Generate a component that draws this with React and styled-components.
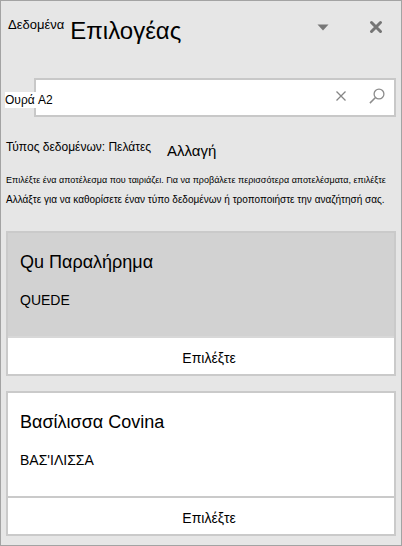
import React, { useState } from "react";
import styled, { createGlobalStyle } from "styled-components";

const results = [
  { id: 1, name: "Qu Παραλήρημα", detail: "QUEDE", selected: true },
  { id: 2, name: "Βασίλισσα Covina", detail: "ΒΑΣ'ΙΛΙΣΣΑ", selected: false },
];

const App = () => {
  const [query, setQuery] = useState("Ουρά A2");

  return (
    <>
      <GlobalStyle />
      <Panel>
        <Header>
          <Prefix>Δεδομένα</Prefix>
          <Title>Επιλογέας</Title>
          <HeaderButton type="button" aria-label="Επιλογές">
            <svg width="12" height="7" viewBox="0 0 12 7">
              <path d="M0.5 0.5h11L6 6.5z" fill="#777" />
            </svg>
          </HeaderButton>
          <HeaderButton type="button" aria-label="Κλείσιμο">
            <svg width="14" height="14" viewBox="0 0 14 14">
              <path
                d="M2.5 2.5l9 9M11.5 2.5l-9 9"
                stroke="#757575"
                strokeWidth="3"
                strokeLinecap="round"
              />
            </svg>
          </HeaderButton>
        </Header>

        <SearchBox onSubmit={(e) => e.preventDefault()}>
          <SearchInput
            type="text"
            aria-label="Αναζήτηση"
            value={query}
            onChange={(e) => setQuery(e.target.value)}
          />
          <SearchButton
            type="button"
            aria-label="Απαλοιφή"
            onClick={() => setQuery("")}
          >
            <svg width="12" height="12" viewBox="0 0 12 12">
              <path
                d="M1.5 1.5l9 9M10.5 1.5l-9 9"
                stroke="#858585"
                strokeWidth="1.3"
              />
            </svg>
          </SearchButton>
          <SearchButton type="submit" aria-label="Αναζήτηση">
            <svg width="16" height="16" viewBox="0 0 16 16" fill="none">
              <circle cx="10" cy="6" r="4.9" stroke="#8c8c8c" strokeWidth="1.3" />
              <path d="M6.5 9.5L0.9 15.1" stroke="#8c8c8c" strokeWidth="1.5" />
            </svg>
          </SearchButton>
        </SearchBox>

        <TypeRow>
          <span>Τύπος δεδομένων: Πελάτες</span>
          <ChangeLink href="#">Αλλαγή</ChangeLink>
        </TypeRow>
        <Hints>
          <Hint $small>
            Επιλέξτε ένα αποτέλεσμα που ταιριάζει. Για να προβάλετε περισσότερα
            αποτελέσματα, επιλέξτε
          </Hint>
          <Hint>
            Αλλάξτε για να καθορίσετε έναν τύπο δεδομένων ή τροποποιήστε την
            αναζήτησή σας.
          </Hint>
        </Hints>

        <CardList>
          {results.map((item) => (
            <Card key={item.id}>
              <CardBody $selected={item.selected}>
                <CardName>{item.name}</CardName>
                <CardDetail>{item.detail}</CardDetail>
              </CardBody>
              <SelectButton type="button">Επιλέξτε</SelectButton>
            </Card>
          ))}
        </CardList>
      </Panel>
    </>
  );
};

const GlobalStyle = createGlobalStyle`
  * {
    box-sizing: border-box;
  }
  body {
    margin: 0;
    background: #e6e6e6;
    color: #000;
    font-family: "Liberation Sans", Arial, sans-serif;
  }
  button, input {
    font-family: inherit;
    color: inherit;
  }
  svg {
    display: block;
  }
`;

const Panel = styled.div`
  min-height: 100vh;
  padding: 0 5px 8px;
  border: 1px solid #a3a3a3;
  background: #e6e6e6;
`;

const Header = styled.header`
  display: flex;
  align-items: flex-start;
  padding: 12px 12px 0 2px;
  height: 77px;
`;

const Prefix = styled.span`
  font-size: 13px;
  line-height: 24px;
`;

const Title = styled.h1`
  flex: 1;
  margin: 0 0 0 6px;
  font-size: 24px;
  font-weight: 400;
  line-height: 36px;
`;

const HeaderButton = styled.button`
  display: flex;
  align-items: center;
  justify-content: center;
  width: 16px;
  height: 28px;
  margin-left: 37px;
  padding: 0;
  border: 0;
  background: none;
`;

const SearchBox = styled.form`
  display: flex;
  align-items: center;
  gap: 20px;
  height: 39px;
  margin-left: 28px;
  padding-right: 9px;
  border: 2px solid #c8c8c8;
  background: #fff;
`;

const SearchInput = styled.input`
  flex: 1;
  min-width: 0;
  height: 16px;
  margin: 4px 0 0 -31px;
  padding: 0;
  border: 0;
  outline: none;
  background: #fff;
  font-size: 12px;
`;

const SearchButton = styled.button`
  display: flex;
  align-items: center;
  justify-content: center;
  width: 16px;
  height: 28px;
  padding: 0 0 4px;
  border: 0;
  background: none;
`;

const TypeRow = styled.div`
  display: flex;
  gap: 16px;
  margin-top: 20px;
  font-size: 12px;
  line-height: 20px;
`;

const ChangeLink = styled.a`
  padding-top: 4px;
  color: inherit;
  font-size: 15px;
  text-decoration: none;
`;

const Hints = styled.div`
  margin-top: 9px;
`;

const Hint = styled.p`
  margin: 0;
  font-size: ${({ $small }) => ($small ? "9px" : "10px")};
  line-height: 20px;
  white-space: nowrap;
`;

const CardList = styled.div`
  display: grid;
  gap: 15px;
  margin-top: 21px;
`;

const Card = styled.section`
  border: 2px solid #cacaca;
  background: #fff;
`;

const CardBody = styled.div`
  height: 105px;
  padding: 17px 12px;
  border-bottom: 2px solid ${({ $selected }) => ($selected ? "#d8d8d8" : "#cacaca")};
  background: ${({ $selected }) => ($selected ? "#d2d2d2" : "#fff")};
`;

const CardName = styled.h2`
  margin: 0;
  font-size: 18px;
  font-weight: 400;
  line-height: 24px;
`;

const CardDetail = styled.p`
  margin: 16px 0 0;
  font-size: 14px;
  line-height: 20px;
`;

const SelectButton = styled.button`
  display: block;
  width: 100%;
  height: 36px;
  padding: 4px 0 0 16px;
  border: 0;
  background: #fff;
  font-size: 14px;
`;

export default App;
